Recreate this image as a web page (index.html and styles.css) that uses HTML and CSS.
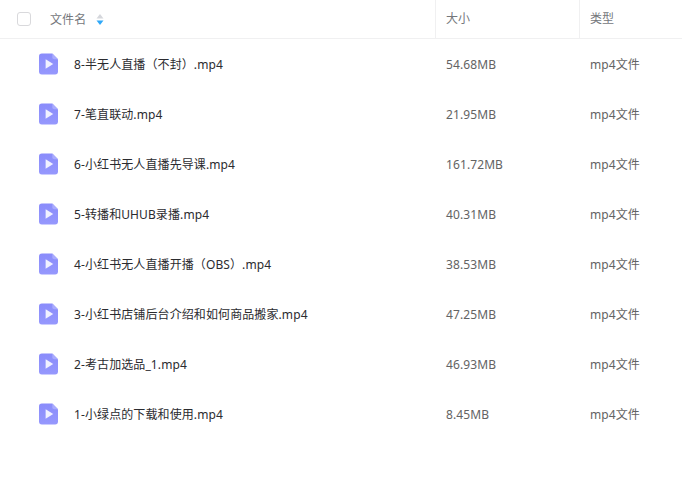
FILE: index.html
```html
<!DOCTYPE html>
<html lang="zh">
<head>
<meta charset="utf-8">
<title>文件列表</title>
<link rel="stylesheet" href="styles.css">
</head>
<body>
<div class="table">
  <div class="head">
    <div class="c-name head-name">
      <span class="check"></span>
      <span class="label">文件名</span>
      <svg class="sort" width="8" height="13" viewBox="0 0 8 13"><path d="M4 1 7.500 5.500H.5z" fill="#d5d7dc"/><path d="M4 12 7.500 7.500H.5z" fill="#2fa8f8"/></svg>
    </div>
    <div class="c-size head-cell">大小</div>
    <div class="c-type head-cell">类型</div>
  </div>
  <div class="row"><div class="c-name"><svg class="ficon" viewBox="0 0 20 22"><use href="#f"/></svg><span class="fname">8-半无人直播（不封）.mp4</span></div><div class="c-size">54.68MB</div><div class="c-type">mp4文件</div></div>
  <div class="row"><div class="c-name"><svg class="ficon" viewBox="0 0 20 22"><use href="#f"/></svg><span class="fname">7-笔直联动.mp4</span></div><div class="c-size">21.95MB</div><div class="c-type">mp4文件</div></div>
  <div class="row"><div class="c-name"><svg class="ficon" viewBox="0 0 20 22"><use href="#f"/></svg><span class="fname">6-小红书无人直播先导课.mp4</span></div><div class="c-size">161.72MB</div><div class="c-type">mp4文件</div></div>
  <div class="row"><div class="c-name"><svg class="ficon" viewBox="0 0 20 22"><use href="#f"/></svg><span class="fname">5-转播和UHUB录播.mp4</span></div><div class="c-size">40.31MB</div><div class="c-type">mp4文件</div></div>
  <div class="row"><div class="c-name"><svg class="ficon" viewBox="0 0 20 22"><use href="#f"/></svg><span class="fname">4-小红书无人直播开播（OBS）.mp4</span></div><div class="c-size">38.53MB</div><div class="c-type">mp4文件</div></div>
  <div class="row"><div class="c-name"><svg class="ficon" viewBox="0 0 20 22"><use href="#f"/></svg><span class="fname">3-小红书店铺后台介绍和如何商品搬家.mp4</span></div><div class="c-size">47.25MB</div><div class="c-type">mp4文件</div></div>
  <div class="row"><div class="c-name"><svg class="ficon" viewBox="0 0 20 22"><use href="#f"/></svg><span class="fname">2-考古加选品_1.mp4</span></div><div class="c-size">46.93MB</div><div class="c-type">mp4文件</div></div>
  <div class="row"><div class="c-name"><svg class="ficon" viewBox="0 0 20 22"><use href="#f"/></svg><span class="fname">1-小绿点的下载和使用.mp4</span></div><div class="c-size">8.45MB</div><div class="c-type">mp4文件</div></div>
</div>
<svg class="defs" width="0" height="0"><defs><linearGradient id="g" x1="0" y1="0" x2="0" y2="1"><stop offset="0" stop-color="#8a8cfb"/><stop offset="1" stop-color="#9698fd"/></linearGradient><g id="f"><path d="M3 0H14L20 6V19a3 3 0 0 1-3 3H3a3 3 0 0 1-3-3V3a3 3 0 0 1 3-3z" fill="url(#g)"/><path d="M14 0 20 6H16a2 2 0 0 1-2-2z" fill="#a9abfd"/><path d="M7 6 15 11 7 16z" fill="#f1f1ff"/></g></defs></svg>
</body>
</html>
```
FILE: styles.css
```css
* { box-sizing: border-box; }
html, body { margin: 0; padding: 0; background: #fff; }
body {
  width: 682px;
  height: 478px;
  overflow: hidden;
  font-family: "Noto Sans", "Noto Sans CJK SC", sans-serif;
  font-size: 12px;
  line-height: 18px;
  letter-spacing: 0.1px;
}
.table { display: flex; flex-direction: column; }
.head {
  display: flex;
  height: 39px;
  border-bottom: 1px solid #f0f0f1;
  color: #75777c;
}
.row { display: flex; height: 50px; align-items: center; color: #636363; }
.row .c-size, .row .c-type, .fname { padding-top: 2px; }
.c-name { width: 435px; display: flex; align-items: center; padding-left: 39px; }
.c-size { width: 144px; padding-left: 11px; }
.c-type { width: 103px; padding-left: 11px; }
.head-name { padding-left: 17px; }
.head-cell { display: flex; align-items: center; border-left: 1px solid #f0f0f1; padding-left: 10px; padding-bottom: 1px; }
.check {
  width: 14px;
  height: 14px;
  border: 1px solid #d9d9dc;
  border-radius: 3px;
  margin-right: 19px;
}
.label { padding-top: 2px; }
.sort { margin-left: 10px; }
.ficon { width: 19px; height: 22px; margin-right: 16px; flex: none; }
.fname { color: #2b2b2f; }
.defs { position: absolute; }
```
